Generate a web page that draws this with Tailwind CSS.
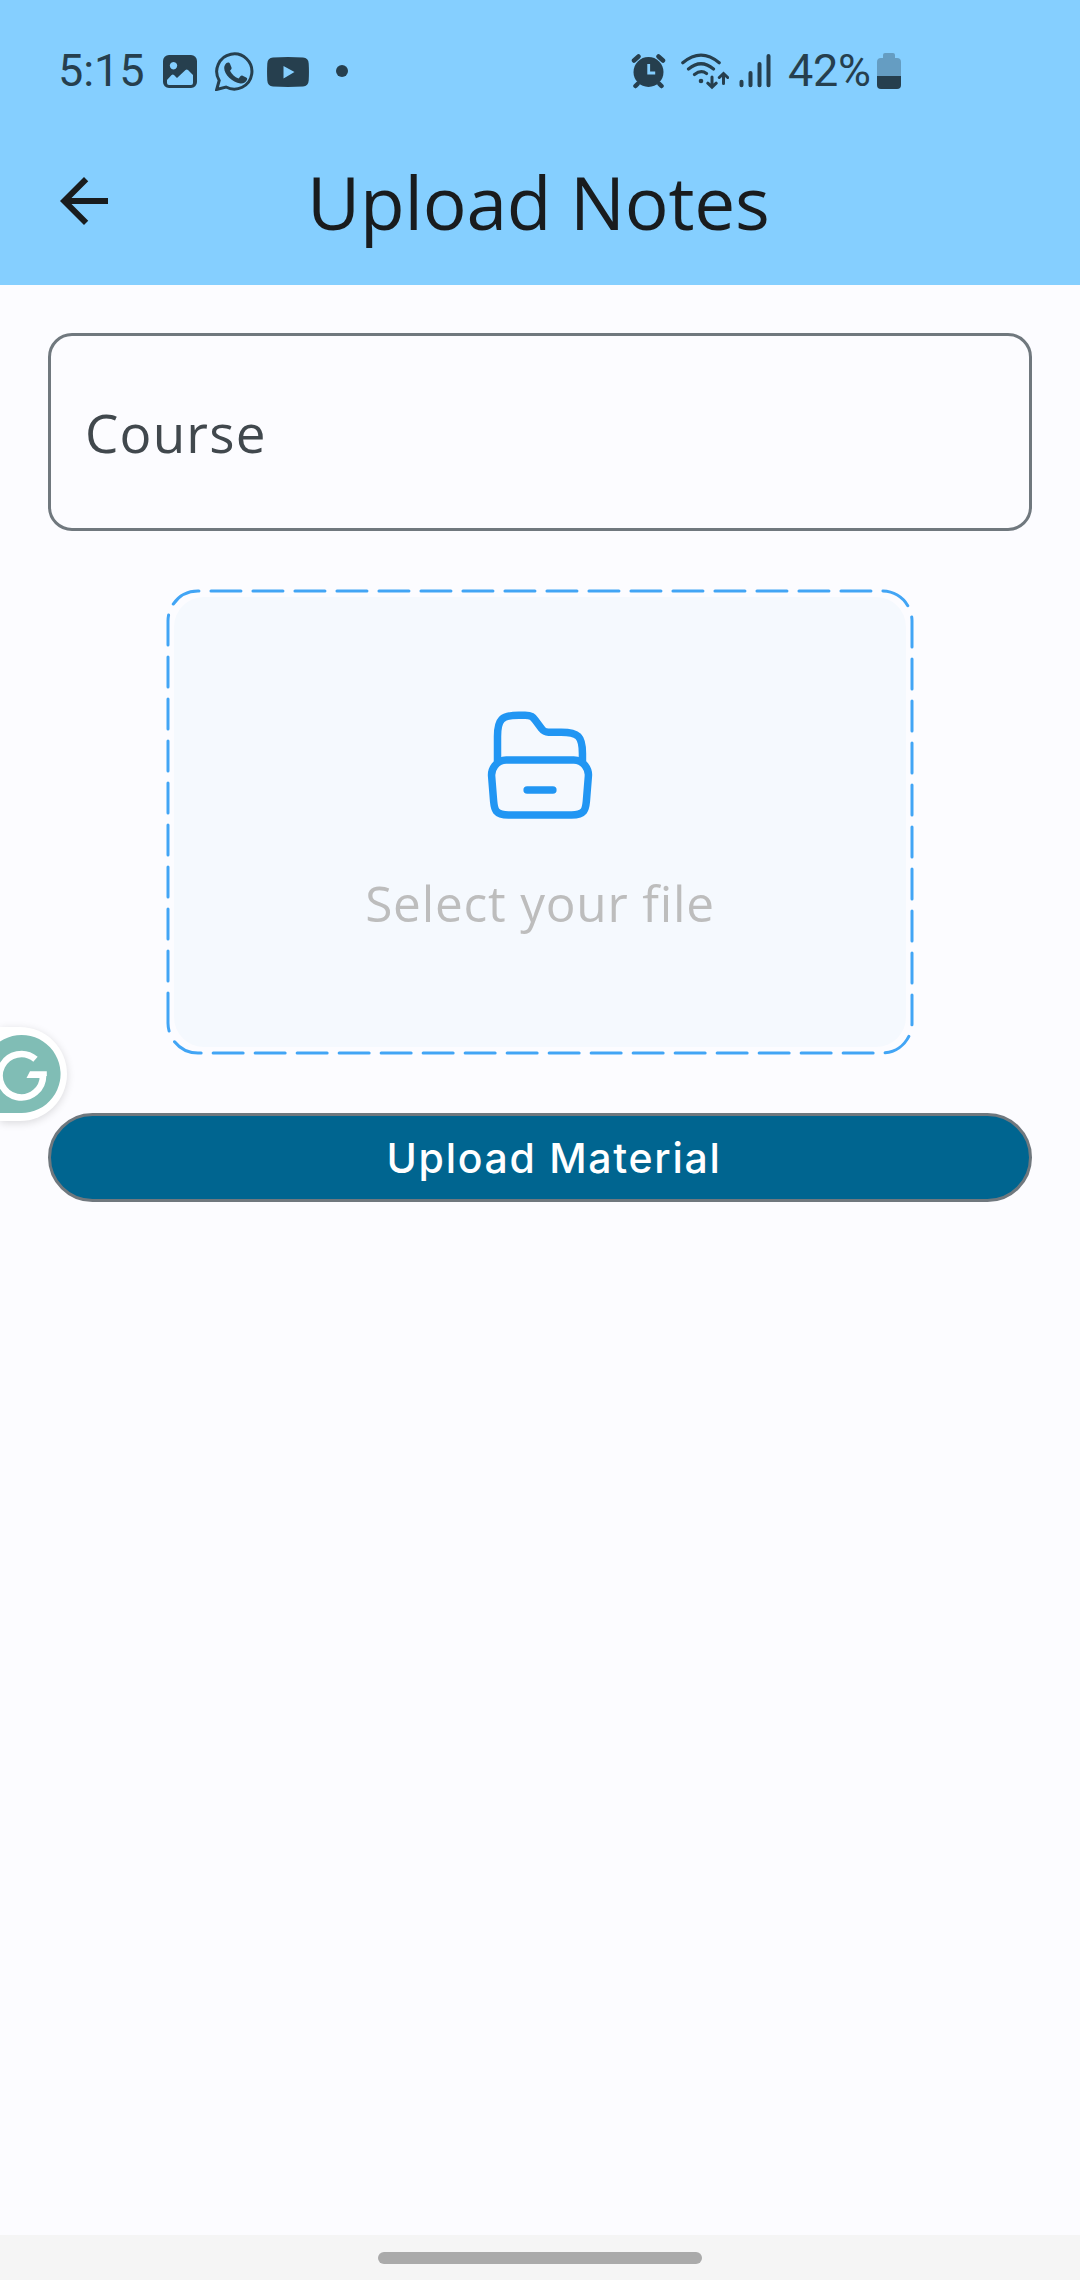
<!DOCTYPE html>
<html lang="en">
<head>
<meta charset="utf-8">
<title>Upload Notes</title>
<script src="https://cdn.jsdelivr.net/npm/@tailwindcss/browser@4"></script>
</head>
<body class="bg-[#fcfcff]">
<div class="relative flex h-[2280px] w-[1080px] flex-col overflow-hidden bg-[#fcfcff] font-['Open_Sans',sans-serif]">
  <header class="h-[285px] bg-[#85cfff]">
    <div class="flex h-[132px] items-center pt-[10px] pl-[58px] font-['Roboto',sans-serif] text-[45px] leading-none text-[#263f4e]">
      <span class="w-[105px] pb-px tracking-[-0.1px] whitespace-nowrap">5:15</span>
      <svg class="h-10 w-[34px] shrink-0" viewBox="163 51 34 40" fill="currentColor"><path fill-rule="evenodd" d="M169 55h22a6 6 0 0 1 6 6v21a6 6 0 0 1-6 6h-22a6 6 0 0 1-6-6V61a6 6 0 0 1 6-6ZM173.500 62a3.700 3.700 0 1 0 .01 0ZM167 80v3q0 2 2 2h22q2 0 2-2V75l-5-5q-1.300-1-2.500 0l-8.500 8-3-3q-1.200-1-2.400 0Z"/></svg>
      <svg class="ml-[18px] h-10 w-[39px] shrink-0" viewBox="215 51 39 40"><path d="M216.700 89.500L219.200 80.500A17.600 17.600 0 1 1 226 87Z" fill="none" stroke="currentColor" stroke-width="3"/><path d="M226.500 63c1.500-1 3-.5 3.500.8l1.500 3.700c.4 1-.1 1.700-1.500 3.300 2 3.800 4.700 6.200 8.600 7.700l2-2.400c.6-.7 1.200-.8 2-.4l3.600 1.700c1 .5 1.200 1 .8 2.400-.8 2.500-3.800 4-6.500 3.700-8.300-1-16.300-9.200-16.300-15.500 0-2 1-4 2.300-5Z" fill="currentColor"/></svg>
      <svg class="ml-[13px] h-10 w-[42px] shrink-0" viewBox="267 51 42 40" fill="currentColor"><path fill-rule="evenodd" d="M273 57.500q15-1 30 0 5.500.4 5.700 6 .5 8.500 0 17-.3 5.500-5.700 6-15 .9-30 0-5.400-.5-5.700-6-.5-8.500 0-17 .3-5.600 5.700-6ZM283.500 66v12.500L294.500 72Z"/></svg>
      <span class="ml-[27px] size-3 shrink-0 rounded-full bg-[#263f4e]"></span>
      <svg class="ml-[283px] h-10 w-[36px] shrink-0" viewBox="631 51 36 40" stroke-linecap="round" fill="none"><circle cx="648.500" cy="72" r="15" fill="#263f4e"/><path d="M634 60.500l4.500-4M663 60.500l-4.500-4M637.500 84l-2 2M659.500 84l2 2" stroke="#263f4e" stroke-width="4.500"/><path d="M648.700 64v9h6.500" stroke="#85cfff" stroke-width="2.800" stroke-linecap="butt"/></svg>
      <svg class="ml-[14px] h-10 w-[48px] shrink-0" viewBox="681 51 48 40" fill="none" stroke="currentColor" stroke-width="3.200" stroke-linecap="round"><path d="M682.800 62.800Q701 47.500 719.200 62.800M688.500 69Q701 58.500 713.500 69M694.500 74.500Q701 69.500 706.500 73.500"/><circle cx="701" cy="81" r="2.300" fill="currentColor" stroke="none"/><path d="M712 77v9.500M707.800 83.200l4.200 4 4.200-4M723.500 83.500V74M719.300 77.500l4.200-4 4.200 4" stroke-width="3"/></svg>
      <svg class="ml-[10px] h-10 w-[33px] shrink-0" viewBox="739 51 33 40" stroke="currentColor" stroke-width="4" stroke-linecap="round"><path d="M741.500 81.800v3.500M750.500 73v12.300M759.500 64v21.300M768.500 56v29.300"/></svg>
      <span class="ml-[16px] w-[89px] pb-px tracking-[-0.3px] whitespace-nowrap">42%</span>
      <svg class="h-10 w-[24px] shrink-0" viewBox="877 51 24 40"><path d="M885 53h8q2 0 2 2v3h2q4 0 4 4v14h-24V62q0-4 4-4h2v-3q0-2 2-2Z" fill="#659dc2"/><path d="M877 76h24v9q0 4-4 4h-16q-4 0-4-4Z" fill="#263f4e"/></svg>
    </div>
    <div class="flex h-[138px] items-center pl-12 text-[#191c1e]">
      <svg class="size-[72px] shrink-0" viewBox="0 0 24 24" fill="currentColor"><path d="M20 11H7.830l5.590-5.590L12 4l-8 8 8 8 1.410-1.410L7.830 13H20z"/></svg>
      <h1 class="ml-[187px] whitespace-nowrap text-[73px] leading-none tracking-[-0.2px]">Upload Notes</h1>
    </div>
  </header>

  <main class="flex grow flex-col items-center px-12 pt-12">
    <div class="flex h-[198px] w-full items-center rounded-3xl border-3 border-[#70787e] pt-px pl-[34px] text-[53px] leading-none tracking-[1.2px] text-[#41484d]">Course</div>

    <div class="mt-[57px] grid h-[468px] w-[750px]">
      <svg class="col-start-1 row-start-1 h-[468px] w-[750px]" viewBox="165 588 750 468" fill="none"><rect x="174" y="597" width="732" height="450" rx="30" fill="#f5f9fe"/><path d="M168 1023V621A30 30 0 0 1 198 591H882A30 30 0 0 1 912 621V1023A30 30 0 0 1 882 1053H198A30 30 0 0 1 168 1023" stroke="#42a5f5" stroke-width="3" stroke-linecap="round" stroke-dasharray="30 12"/></svg>
      <div class="col-start-1 row-start-1 flex flex-col items-center pt-[117px]">
        <svg class="size-[120px]" viewBox="0 0 24 24" fill="none" stroke="#2196f3" stroke-width="1.500" stroke-linecap="round"><path d="M21.670 14.300L21.270 19.300C21.120 20.830 21 22 18.290 22H5.710C3 22 2.880 20.830 2.730 19.300L2.330 14.300C2.250 13.470 2.510 12.700 2.980 12.110C3.530 11.440 4.340 11 5.250 11H18.750C19.660 11 20.460 11.420 20.990 12.070C21.490 12.700 21.760 13.470 21.670 14.300Z"/><path d="M3.500 11.430V6.280C3.500 2.880 4.350 2.030 7.750 2.030H9.020C10.290 2.030 10.580 2.410 11.060 3.050L12.330 4.750C12.650 5.170 12.840 5.430 13.690 5.430H16.240C19.640 5.430 20.490 6.280 20.490 9.680V11.470M9.430 17H14.570"/></svg>
        <p class="mt-[54px] whitespace-nowrap text-[49.5px] leading-none tracking-[0.8px] text-[#bdbdbd]">Select your file</p>
      </div>
    </div>

    <button class="mt-[57px] flex h-[89px] w-full items-center justify-center rounded-full border-3 border-[#70787e] bg-[#006590] pt-[2px] pl-7 font-['Inter',sans-serif] text-[41px] leading-none font-medium tracking-[1.7px] whitespace-nowrap text-white">Upload Material</button>
  </main>

  <footer class="flex h-[45px] items-center justify-center bg-[#f5f5f5] pt-[1px]">
    <div class="h-3 w-[324px] rounded-full bg-[#aaaaaa]"></div>
  </footer>

  <div class="absolute top-[1027px] left-0 h-[94px] w-[67px] rounded-r-full bg-white shadow-[0_2px_8px_rgba(0,0,0,0.14)]">
    <svg class="h-[94px] w-[67px]" viewBox="0 1027 67 94" fill="none"><path d="M0 1041.500A39 39 0 1 1 21 1113H0Z" fill="#80bdb5"/><path d="M35.500 1059.300A21.700 21.700 0 1 0 43 1074.800" stroke="#fff" stroke-width="6.600"/><path d="M30 1071.300H46.800V1076H43L40 1078H26.500Z" fill="#fff"/></svg>
  </div>
</div>
</body>
</html>
